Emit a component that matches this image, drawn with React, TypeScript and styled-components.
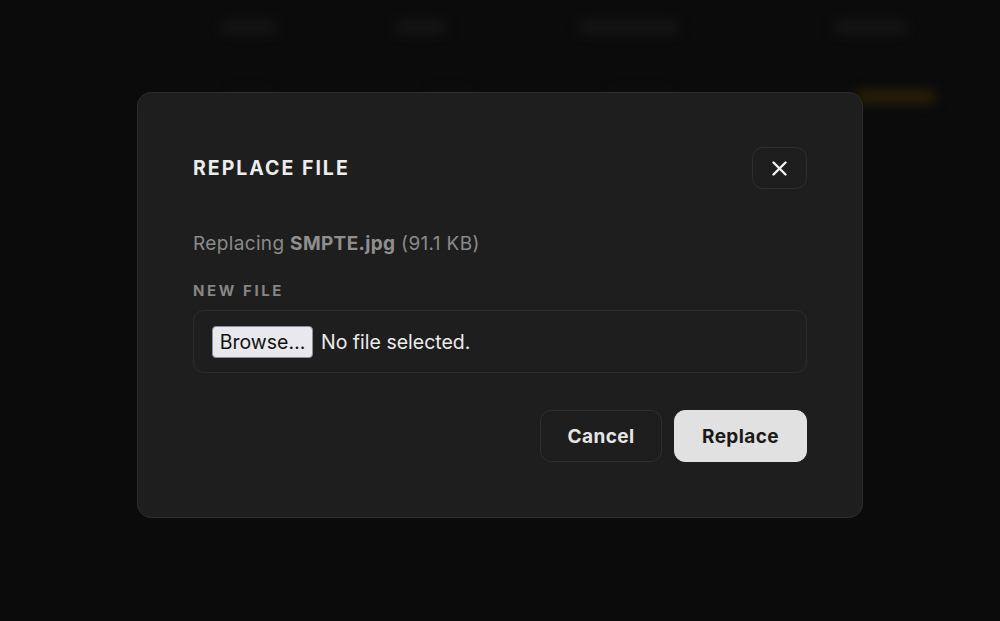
import React from "react";
import styled, { createGlobalStyle } from "styled-components";

const Global = createGlobalStyle`
  html, body { margin: 0; padding: 0; background: #0b0b0b; }
  body { font-family: Inter, "Noto Sans", "Liberation Sans", sans-serif; width: 1000px; height: 621px; overflow: hidden; }
  #root { width: 1000px; height: 621px; }
`;

const Page = styled.div`
  position: relative;
  width: 1000px;
  height: 621px;
  background: #0b0b0b;
  overflow: hidden;
`;

const Backdrop = styled.div`
  filter: blur(6px);
  display: flex;
  flex-direction: column;
`;

const Nav = styled.div`
  height: 54px;
  display: flex;
  align-items: center;
  padding-left: 222px;
`;

const NavItem = styled.div<{ $w: number; $ml: number }>`
  width: ${(p) => p.$w}px;
  margin-left: ${(p) => p.$ml}px;
  height: 12px;
  border-radius: 4px;
  background: #161616;
`;

const SubRow = styled.div`
  margin-top: 30px;
  height: 26px;
  display: flex;
  align-items: center;
  padding-left: 230px;
`;

const SubItem = styled.div<{ $w: number; $ml: number; $c: string }>`
  width: ${(p) => p.$w}px;
  margin-left: ${(p) => p.$ml}px;
  height: 12px;
  border-radius: 4px;
  background: ${(p) => p.$c};
`;

const Overlay = styled.div`
  position: absolute;
  inset: 0;
  display: flex;
  justify-content: center;
  align-items: flex-start;
  padding-top: 92px;
`;

const Modal = styled.div`
  box-sizing: border-box;
  width: 726px;
  height: 426px;
  background: #1e1e1e;
  border: 1px solid #2e2e2e;
  border-radius: 14px;
  padding: 54px 55px 55px 55px;
  display: flex;
  flex-direction: column;
`;

const Header = styled.div`
  display: flex;
  align-items: center;
  justify-content: space-between;
  height: 42px;
`;

const Title = styled.h2`
  margin: 0;
  font-size: 19.5px;
  font-weight: 700;
  letter-spacing: 2px;
  color: #ececec;
`;

const CloseButton = styled.button`
  box-sizing: border-box;
  width: 55px;
  height: 42px;
  border: 1.5px solid #2f2f2f;
  border-radius: 11px;
  background: transparent;
  display: flex;
  align-items: center;
  justify-content: center;
  padding: 0;
  color: #f2f2f2;
`;

const Info = styled.p`
  margin: 42px 0 0;
  font-size: 19px;
  letter-spacing: 0.35px;
  line-height: 26px;
  color: #8a8a8a;
  strong { font-weight: 700; color: #8f8f8f; }
`;

const FieldLabel = styled.div`
  margin-top: 25px;
  font-size: 15px;
  line-height: 18px;
  font-weight: 700;
  letter-spacing: 2.6px;
  color: #858585;
`;

const FileBox = styled.div`
  box-sizing: border-box;
  margin-top: 10px;
  height: 63px;
  border: 1.5px solid #2c2c2c;
  border-radius: 11px;
  display: flex;
  align-items: center;
  padding-left: 18px;
  gap: 8px;
`;

const BrowseButton = styled.span`
  box-sizing: border-box;
  height: 32px;
  width: 101px;
  display: inline-flex;
  align-items: center;
  justify-content: center;
  background: #e9e9ed;
  border: 1px solid #8f8f9d;
  border-radius: 4px;
  color: #111;
  font-size: 19.5px;
`;

const FileName = styled.span`
  color: #ececec;
  font-size: 19.5px;
`;

const Actions = styled.div`
  margin-top: 37px;
  display: flex;
  justify-content: flex-end;
  gap: 12px;
`;

const ActionButton = styled.button<{ $primary?: boolean }>`
  box-sizing: border-box;
  height: 52px;
  width: ${(p) => (p.$primary ? 133 : 122)}px;
  border-radius: 11px;
  border: 1.5px solid ${(p) => (p.$primary ? "#e1e1e1" : "#2f2f2f")};
  background: ${(p) => (p.$primary ? "#e1e1e1" : "transparent")};
  color: ${(p) => (p.$primary ? "#1a1a1a" : "#e6e6e6")};
  font-family: inherit;
  font-size: 19px;
  font-weight: 700;
  letter-spacing: 0.4px;
`;

export default function App() {
  return (
    <>
      <Global />
      <Page>
        <Backdrop>
          <Nav>
            <NavItem $w={54} $ml={0} />
            <NavItem $w={50} $ml={120} />
            <NavItem $w={100} $ml={133} />
            <NavItem $w={72} $ml={155} />
          </Nav>
          <SubRow>
            <SubItem $w={40} $ml={0} $c="#0f0f0f" />
            <SubItem $w={40} $ml={160} $c="#0f0f0f" />
            <SubItem $w={60} $ml={140} $c="#0f0f0f" />
            <SubItem $w={80} $ml={185} $c="#2c2206" />
          </SubRow>
        </Backdrop>
        <Overlay>
          <Modal>
            <Header>
              <Title>REPLACE FILE</Title>
              <CloseButton aria-label="Close">
                <svg width="15" height="15" viewBox="0 0 15 15" fill="none">
                  <path d="M1.5 1.5L13.5 13.5M13.5 1.5L1.5 13.5" stroke="currentColor" strokeWidth="2.4" strokeLinecap="round" />
                </svg>
              </CloseButton>
            </Header>
            <Info>
              Replacing <strong>SMPTE.jpg</strong> (91.1 KB)
            </Info>
            <FieldLabel>NEW FILE</FieldLabel>
            <FileBox>
              <BrowseButton>Browse…</BrowseButton>
              <FileName>No file selected.</FileName>
            </FileBox>
            <Actions>
              <ActionButton>Cancel</ActionButton>
              <ActionButton $primary>Replace</ActionButton>
            </Actions>
          </Modal>
        </Overlay>
      </Page>
    </>
  );
}
